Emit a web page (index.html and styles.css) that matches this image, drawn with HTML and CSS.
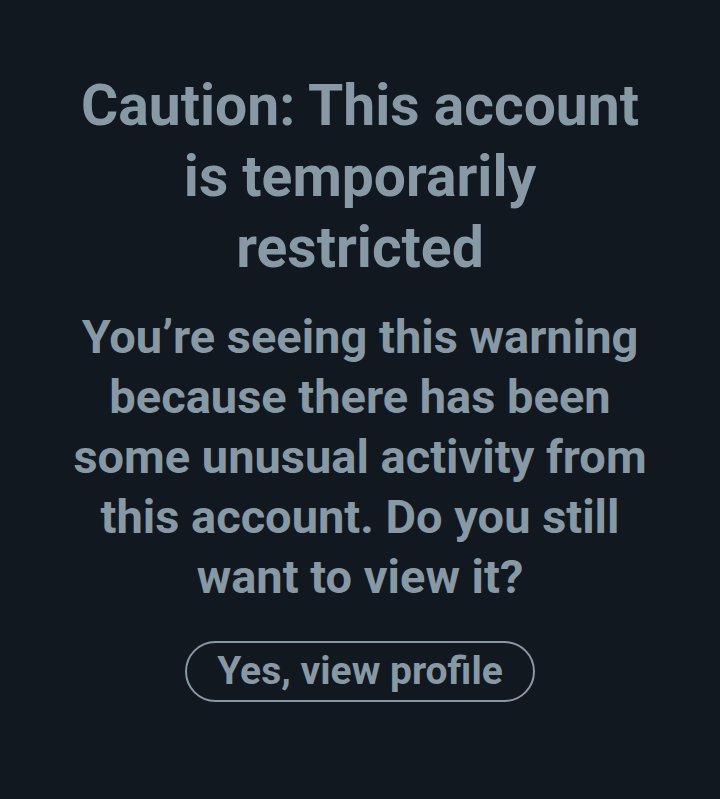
FILE: index.html
```html
<!DOCTYPE html>
<html lang="en">
<head>
<meta charset="utf-8">
<link rel="stylesheet" href="styles.css">
</head>
<body>
<main class="warning">
  <h1 class="title">Caution: This account is temporarily restricted</h1>
  <p class="message">You’re seeing this warning because there has been some unusual activity from this account. Do you still want to view it?</p>
  <button class="view-btn" type="button">Yes, view profile</button>
</main>
</body>
</html>
```

FILE: styles.css
```css
html, body {
  margin: 0;
  padding: 0;
  background: #121820;
  height: 100%;
}
body {
  font-family: Roboto, "Liberation Sans", sans-serif;
  color: #8899a6;
}
.warning {
  display: flex;
  flex-direction: column;
  align-items: center;
  text-align: center;
  max-width: 590px;
  margin: 0 auto;
  padding-top: 70px;
}
.title {
  margin: 0;
  font-size: 57px;
  line-height: 71px;
  font-weight: 700;
}
.message {
  margin: 24px 0 0;
  font-size: 47px;
  line-height: 60px;
  font-weight: 700;
}
.view-btn {
  margin-top: 34px;
  height: 61px;
  padding: 0 30px;
  border: 2px solid #8899a6;
  border-radius: 31px;
  background: transparent;
  color: #8899a6;
  font-family: Roboto, "Liberation Sans", sans-serif;
  font-size: 39px;
  font-weight: 700;
  line-height: 1;
}
```
